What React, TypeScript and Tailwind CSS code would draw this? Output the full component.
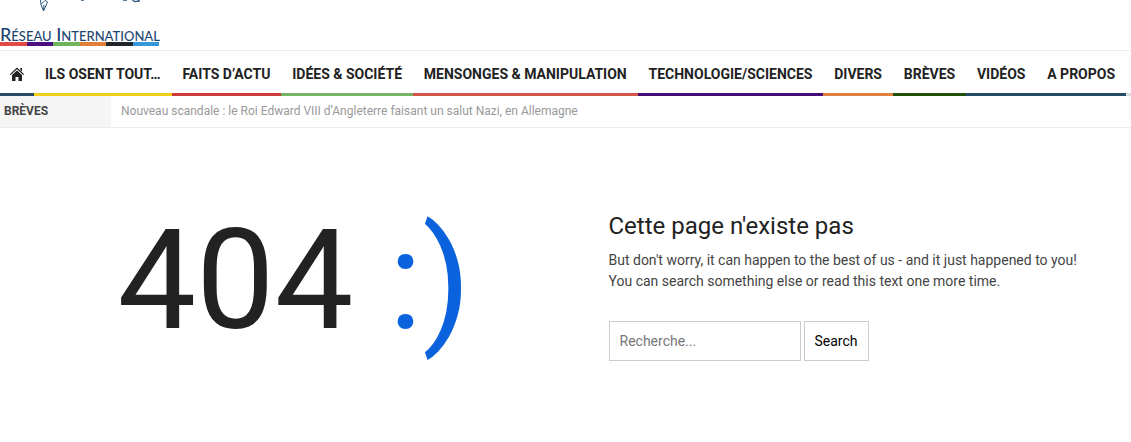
const stripes = ["bg-[#e14a45]", "bg-[#4b0f82]", "bg-[#6fb35c]", "bg-[#e08038]", "bg-[#20262b]", "bg-[#3498db]"];

const menu = [
    { label: "Ils osent tout…", border: "border-[#f0cf1d]" },
    { label: "Faits d’actu", border: "border-[#cf3a3a]" },
    { label: "Idées & Société", border: "border-[#75b566]" },
    { label: "Mensonges & manipulation", border: "border-[#d35549]" },
    { label: "Technologie/Sciences", border: "border-[#450b78]" },
    { label: "Divers", border: "border-[#e0823d]" },
    { label: "Brèves", border: "border-[#225008]" },
    { label: "Vidéos", border: "border-[#244c66]" },
    { label: "A propos", border: "border-[#244c66]" },
];

export default function App() {
    return (
        <div className="min-h-screen bg-white font-['Roboto',sans-serif] text-[#222]">
            <header>
                <Logo />
                <MainMenu />
                <NewsTicker />
            </header>
            <NotFound />
        </div>
    );
}

function Logo() {
    return (
        <div className="h-[51px] border-b border-[#ededed]">
            <a href="#" className="block w-[159px]">
                <svg viewBox="0 0 159 26" className="block h-[26px] w-full" fill="none" stroke="#2a567c" aria-hidden="true">
                    <path d="M40.500 0l.5 4.500 2.500 6.500 4-9-3-2M41 4.500l3.500-3.500M43.500 11l.5-6" strokeWidth="1" />
                    <path d="M81 0h3M123 0h4M132.500 0c1 2 5 2 6.500 0v2" strokeWidth="1.3" />
                </svg>
                <span className="block whitespace-nowrap font-['Lato',sans-serif] text-[18px] font-medium leading-4 text-[#1d4770] [font-variant:small-caps]">
                    Réseau International
                </span>
                <span className="flex h-1">
                    {stripes.map((color) => (
                        <span key={color} className={`flex-1 ${color}`} />
                    ))}
                </span>
            </a>
        </div>
    );
}

function MainMenu() {
    return (
        <nav className="flex overflow-hidden whitespace-nowrap text-sm font-bold uppercase leading-[38px]">
            <a href="#" aria-label="Accueil" className="flex items-center border-b-3 border-[#2a4a66] px-[9px] pt-1">
                <HomeIcon />
            </a>
            {menu.map((item) => (
                <a key={item.label} href="#" className={`flex-auto border-b-3 px-[10px] pt-1 text-center ${item.border}`}>
                    {item.label}
                </a>
            ))}
            <span className="w-[5px] border-b-3 border-[#d9dde2]" />
        </nav>
    );
}

function HomeIcon() {
    return (
        <svg viewBox="0 0 16 16" className="size-4" fill="#222" aria-hidden="true">
            <path d="M.8 8.200L8 1.500l7.200 6.700-.9.9L8 3.300 1.700 9.100z" />
            <path d="M11.300 2H13v3.600l-1.700-1.500z" />
            <path d="M3 9l5-4.600L13 9v6H9.500v-4h-3v4H3z" />
        </svg>
    );
}

function NewsTicker() {
    return (
        <div className="flex border-b border-[#ededed] text-xs leading-[31px]">
            <div className="w-[111px] bg-[#f5f5f5] pl-1 font-bold uppercase text-[#444]">Brèves</div>
            <a href="#" className="pl-[10px] text-[#999]">
                Nouveau scandale : le Roi Edward VIII d’Angleterre faisant un salut Nazi, en Allemagne
            </a>
        </div>
    );
}

function NotFound() {
    return (
        <main className="grid grid-cols-2 px-4 pt-[82px]">
            <div className="flex justify-center pl-[7px] text-[140px] leading-[140px]">
                <span>404</span>
                <span className="ml-[35px] text-[#0a63dc]">:)</span>
            </div>
            <div className="pl-[43px]">
                <h1 className="text-2xl leading-8">Cette page n'existe pas</h1>
                <p className="mt-2 text-sm leading-[21px] text-[#444]">
                    But don't worry, it can happen to the best of us - and it just happened to you!
                    <br />
                    You can search something else or read this text one more time.
                </p>
                <form className="mt-[29px] flex gap-[3px] text-sm" onSubmit={(e) => e.preventDefault()}>
                    <input
                        type="text"
                        aria-label="Recherche"
                        placeholder="Recherche..."
                        className="h-10 w-48 border border-[#ccc] px-[10px] placeholder:text-[#777]"
                    />
                    <button type="submit" className="h-10 border border-[#ccc] px-[10px] text-black">
                        Search
                    </button>
                </form>
            </div>
        </main>
    );
}
